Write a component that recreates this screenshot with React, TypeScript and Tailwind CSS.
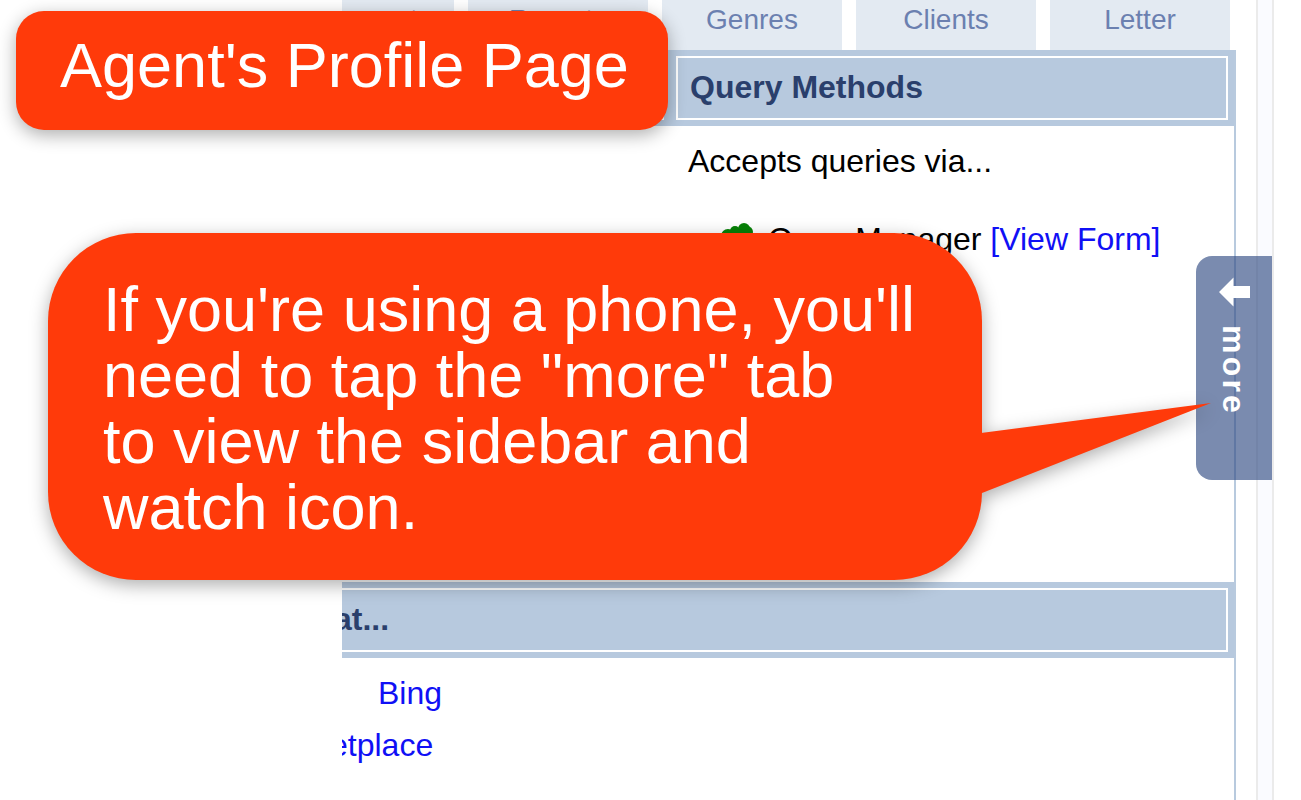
const TABS = ["Comments", "Reports", "Genres", "Clients", "Letter"];

function Heading({ text, className = "" }: { text: string; className?: string }) {
  return (
    <div className={`h-16 border-2 border-white flex items-center pb-0.5 ${className}`}>
      <h2 className="text-[32px] leading-10 font-bold text-[#2a3f6c] whitespace-nowrap">{text}</h2>
    </div>
  );
}

function Clover() {
  return (
    <svg width="36" height="36" viewBox="0 0 36 36" className="shrink-0" aria-hidden="true">
      <g fill="#078207">
        <circle cx="8" cy="15" r="7" />
        <circle cx="15" cy="10" r="5" />
        <circle cx="24" cy="8" r="6" />
        <circle cx="27" cy="11" r="6" />
        <circle cx="8" cy="23" r="7" />
        <circle cx="27" cy="23" r="7" />
        <circle cx="18" cy="16" r="8" />
      </g>
      <path d="M18 18Q18 28 24 35" stroke="#078207" strokeWidth="3" fill="none" />
    </svg>
  );
}

function MoreTab() {
  return (
    <button
      type="button"
      className="absolute top-64 right-[29px] w-[76px] h-56 rounded-l-2xl bg-[#2d4780]/63 text-white flex flex-col items-center gap-[18px] pt-[21px]"
    >
      <svg width="32" height="30" viewBox="0 0 32 30" fill="white" aria-hidden="true">
        <path d="M1 15 15.500 0.500V9H32V21H15.500V29.500Z" />
      </svg>
      <span className="[writing-mode:vertical-rl] text-[32px] leading-10 font-bold tracking-widest">more</span>
    </button>
  );
}

export default function App() {
  return (
    <div className="relative h-screen overflow-hidden bg-white text-black font-['Liberation_Sans',Arial,sans-serif]">
      <div className="flex h-full pl-[342px] pr-[27px]">
        <main className="flex-1 min-w-0 overflow-hidden flex flex-col">
          <nav className="flex justify-end gap-[14px] pr-1.5">
            {TABS.map(tab => (
              <a key={tab} href="#" className="w-[180px] h-[50px] shrink-0 bg-[#e3eaf2] text-[#6b80b0] text-[28px] leading-10 text-center">
                {tab}
              </a>
            ))}
          </nav>

          <div className="flex-1 flex flex-col -ml-3 border-r-2 border-[#b8cade]">
            <section>
              <div className="flex gap-3 bg-[#b7c9de] py-1.5 pr-1.5">
                <div className="flex-1 border-2 border-white" />
                <Heading text="Query Methods" className="w-[552px] pl-3" />
              </div>
              <div className="ml-auto w-[546px] h-[456px] pt-[15px] text-[32px] leading-10">
                <p>Accepts queries via...</p>
                <ul className="pt-[38px] pl-8">
                  <li className="flex items-center gap-3 whitespace-nowrap">
                    <Clover />
                    <span>
                      QueryManager <a href="#" className="text-[#1010f5]">[View Form]</a>
                    </span>
                  </li>
                </ul>
              </div>
            </section>

            <section>
              <div className="bg-[#b7c9de] py-1.5 pr-1.5">
                <Heading text="at..." className="pl-0.5" />
              </div>
              <ul className="pt-[9px] text-[32px] leading-[52px] text-[#1010f5]">
                <li className="pl-12"><a href="#">Bing</a></li>
                <li><a href="#">etplace</a></li>
              </ul>
            </section>
          </div>
        </main>
        <div className="ml-5 w-[18px] bg-[#fafbff] border-x-2 border-[#ebebeb]" />
      </div>

      <MoreTab />

      <h1 className="absolute left-4 top-[11px] h-[119px] w-[652px] rounded-[28px] bg-[#ff3a0a] pl-11 pt-4 text-[63px] leading-[76px] text-white whitespace-nowrap shadow-[0_5px_18px_rgba(0,0,0,0.32)]">
        Agent's Profile Page
      </h1>

      <div className="absolute left-12 top-[233px] drop-shadow-[0_5px_9px_rgba(0,0,0,0.32)]">
        <p className="w-[934px] h-[347px] rounded-[88px] bg-[#ff3a0a] pl-[55px] pt-[43px] text-[63px] leading-[66px] text-white whitespace-nowrap">
          If you're using a phone, you'll<br />
          need to tap the "more" tab<br />
          to view the sidebar and<br />
          watch icon.
        </p>
        <svg width="230" height="90" viewBox="0 0 230 90" className="absolute left-[933px] top-[170px]" aria-hidden="true">
          <path d="M0 30 230 0 1 90H0Z" fill="#ff3a0a" />
        </svg>
      </div>
    </div>
  );
}
